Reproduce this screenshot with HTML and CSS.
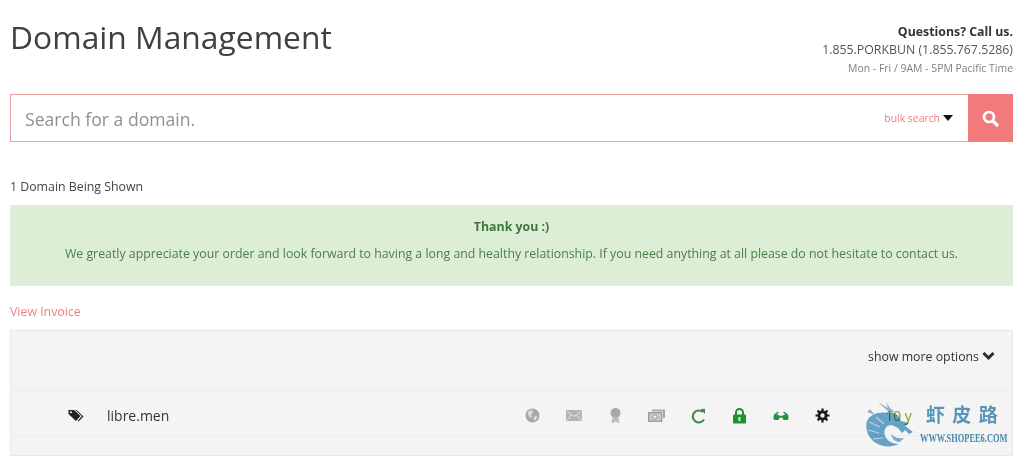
FILE: index.html
```html
<!DOCTYPE html>
<html lang="en">
<head>
<meta charset="utf-8">
<title>Domain Management</title>
<link rel="stylesheet" href="styles.css">
</head>
<body>
<header class="top">
  <h1 class="title">Domain Management</h1>
  <div class="contact">
    <div class="q">Questions? Call us.</div>
    <div class="phone">1.855.PORKBUN (1.855.767.5286)</div>
    <div class="hours">Mon - Fri / 9AM - 5PM Pacific Time</div>
  </div>
</header>
<div class="search">
  <span class="placeholder">Search for a domain.</span>
  <span class="bulk">bulk search</span>
  <span class="caret"></span>
  <span class="btn">
    <svg width="17" height="17" viewBox="0 0 17 17"><circle cx="7" cy="7" r="5" fill="none" stroke="#fff" stroke-width="2.6"/><path d="M10.8 10.8 L15 15" stroke="#fff" stroke-width="3.2" stroke-linecap="round"/></svg>
  </span>
</div>
<div class="count">1 Domain Being Shown</div>
<div class="alert">
  <div class="thanks">Thank you :)</div>
  <div class="msg">We greatly appreciate your order and look forward to having a long and healthy relationship. If you need anything at all please do not hesitate to contact us.</div>
</div>
<a class="invoice">View Invoice</a>
<section class="panel">
  <div class="options">show more options
    <svg class="chev" width="13" height="10" viewBox="0 0 13 10"><path d="M1.5 2 L6.5 7 L11.5 2" fill="none" stroke="#2a2a2a" stroke-width="3"/></svg>
  </div>
  <div class="row">
    <svg class="tag" width="16" height="13" viewBox="0 0 16 13"><path d="M0.5 1 H6 L12.5 7 L8 12 L0.5 5 Z M8.5 1 L15.5 7.5 L10.5 12.5 L9.8 11.8 L13.8 7.3 L7.3 1 Z" fill="#222"/><circle cx="3" cy="3.3" r="1" fill="#f4f4f4"/></svg>
    <span class="domain">libre.men</span>
    <div class="icons">
      <svg width="15" height="15" viewBox="0 0 15 15"><circle cx="7.5" cy="7.5" r="7" fill="#a8a8a8"/><path d="M3.5 3 L7 2 L8 4.5 L6 6.5 L7 9.5 L5 9.5 L3 6 Z M9.5 8 L12.5 8.5 L10.5 12.5 L8.5 11.5 Z" fill="#dcdcdc"/></svg>
      <svg width="16" height="11" viewBox="0 0 16 11"><rect width="16" height="11" fill="#b4b4b4"/><path d="M0.5 1 L8 6.5 L15.5 1 M0.5 10.5 L5.5 5 M15.5 10.5 L10.5 5" fill="none" stroke="#e4e4e4"/></svg>
      <svg width="11" height="16" viewBox="0 0 11 16"><circle cx="5.5" cy="5" r="5" fill="#a8a8a8"/><path d="M2.5 9.5 L1.5 15.5 L5.5 13.5 L9.5 15.5 L8.5 9.5 Z" fill="#bcbcbc"/></svg>
      <svg width="17" height="13" viewBox="0 0 17 13"><path d="M4 0.5 H17 V9 H15 V2.5 H4 Z" fill="#a8a8a8"/><rect x="0.7" y="3.7" width="13" height="8.6" fill="#c8c8c8" stroke="#a0a0a0" stroke-width="1.4"/><circle cx="7" cy="8" r="2.2" fill="#eee" stroke="#999"/></svg>
      <svg width="15" height="16" viewBox="0 0 15 16"><path d="M13 11.5 A6 6 0 1 1 11.8 4" fill="none" stroke="#3f8a4a" stroke-width="2.1"/><path d="M9.5 1 L14 0.8 L14 6 Z" fill="#3f8a4a"/></svg>
      <svg width="13" height="16" viewBox="0 0 13 16"><path d="M3 7 V4.5 A3.5 3.5 0 0 1 10 4.5 V7" fill="none" stroke="#1f9130" stroke-width="2"/><rect y="6.5" width="13" height="9" rx="1" fill="#1f9130"/><rect x="5.5" y="9" width="2" height="4" fill="#dcefdc"/></svg>
      <svg width="16" height="9" viewBox="0 0 16 9"><path d="M5 0.5 L1 3.5 L0.5 6 A3 3 0 0 0 6.5 6.8 H9.5 A3 3 0 0 0 15.5 6 L15 3.5 L11 0.5 L10.2 1.5 L12.5 3.4 A3 3 0 0 0 9.7 4.8 H6.3 A3 3 0 0 0 3.5 3.4 L5.8 1.5 Z" fill="#2a9140"/></svg>
      <svg width="15" height="15" viewBox="0 0 15 15"><circle cx="7.5" cy="7.5" r="3.6" fill="none" stroke="#1c1c1c" stroke-width="2.8"/><path d="M7.5 0.5 V14.5 M0.5 7.5 H14.5 M2.5 2.5 L12.5 12.5 M12.5 2.5 L2.5 12.5" stroke="#1c1c1c" stroke-width="2.2" stroke-dasharray="3 8 3"/></svg>
    </div>
    <span class="years">10 y</span>
  </div>
</section>
<div class="mark">
  <svg class="dragon" width="52" height="48" viewBox="0 0 52 48">
    <path d="M24 13 C14 11 5 14 2 21 C0 28 2 35 8 41 C15 47 25 48 34 44 C28 44 22 41 20 36 C18 30 21 25 27 25 L33 28 L37 33 L40 30 L44 34 L48 32 L40 26 L44 23 L36 21 L33 15 L26 12 Z" fill="#6ba8cf"/>
    <path d="M4 22 L15 27 M3 30 L14 33 M8 39 L18 38 M11 17 L19 24" stroke="#c6dded" stroke-width="1.2" fill="none"/>
    <path d="M13 2 L24 12 L30 12 L25 8 L21 2 L23 8 Z M2 12 L10 15 L5 9 Z" fill="#8fbcd9"/>
    <path d="M26 34 C30 38 34 39 39 38 L35 42 C30 42 27 39 26 34 Z" fill="#7fb2d4"/>
  </svg>
  <div class="mark-text">
    <div class="mark-cn">虾 皮 路</div>
    <div class="mark-url">WWW.SHOPEE6.COM</div>
  </div>
</div>
</body>
</html>
```
FILE: styles.css
```css
* { box-sizing: border-box; }
html, body { margin: 0; height: 464px; overflow: hidden; }
body { padding: 0 10px 0 10px; font-family: "Open Sans", "Noto Sans", sans-serif; font-size: 12.33px; color: #444; background: #fff; position: relative; }
.top { display: flex; justify-content: space-between; height: 94px; width: 1003px; }
.title { margin: 16px 0 0; font-size: 31.8px; line-height: 42px; font-weight: 400; color: #404040; }
.contact { text-align: right; padding-top: 23px; }
.q { line-height: 18px; font-weight: 700; color: #333; }
.phone { line-height: 18px; color: #555; }
.hours { font-size: 10.45px; line-height: 18px; color: #808080; }
.search { display: flex; align-items: center; width: 1003px; height: 48px; border: 1px solid #e4a2a2; border-right: 0; }
.placeholder { flex: 1; padding: 1px 0 0 14px; font-size: 17.6px; color: #909090; }
.bulk { font-size: 10.4px; color: #f07c7c; }
.caret { margin: 0 15px 0 3px; border: 5px solid transparent; border-top: 6px solid #111; border-bottom: 0; }
.btn { display: flex; width: 45px; height: 48px; margin-top: -1px; margin-bottom: -1px; align-items: center; justify-content: center; background: #f27a7a; }
.count { margin-top: 36px; line-height: 18px; }
.alert { margin-top: 9px; width: 1003px; height: 81px; background: #ddeed6; text-align: center; color: #4a7f4b; padding-top: 13px; }
.thanks { font-weight: 700; line-height: 18px; color: #3c763d; }
.msg { margin-top: 9px; line-height: 18px; }
.invoice { display: block; margin-top: 17px; line-height: 18px; color: #ee7f7f; }
.panel { margin-top: 9px; width: 1003px; height: 126px; background: #f4f4f4; border: 1px solid #e8e8e8; }
.options { height: 60px; padding-bottom: 9px; border-bottom: 1px solid #ebebeb; display: flex; align-items: center; justify-content: flex-end; gap: 3px; padding-right: 17px; color: #333; }
.row { height: 45px; padding-top: 5px; display: flex; align-items: center; border-bottom: 1px solid #ececec; padding-left: 57px; }
.tag { flex: none; }
.domain { margin-left: 23px; font-size: 14px; color: #333; width: 405px; flex: none; }
.icons { display: grid; grid-template-columns: repeat(8, 41.4px); align-items: center; justify-items: center; flex: none; }
.years { margin-left: 42px; font-size: 14px; color: #8a9a2a; }
.mark { position: absolute; left: 865px; top: 400px; display: flex; gap: 3px; mix-blend-mode: multiply; }
.mark-text { position: relative; width: 90px; }
.mark-cn { font-family: "Noto Sans CJK SC", sans-serif; font-size: 19px; line-height: 24px; font-weight: 700; letter-spacing: 1.5px; color: #5b9cc4; margin: 2px 0 0 6px; white-space: nowrap; }
.mark-url { font-family: "Liberation Serif", serif; font-size: 12px; line-height: 12px; margin-top: 6px; font-weight: 700; color: #4d8fb8; white-space: nowrap; transform: scaleX(.7); transform-origin: left center; }
```
